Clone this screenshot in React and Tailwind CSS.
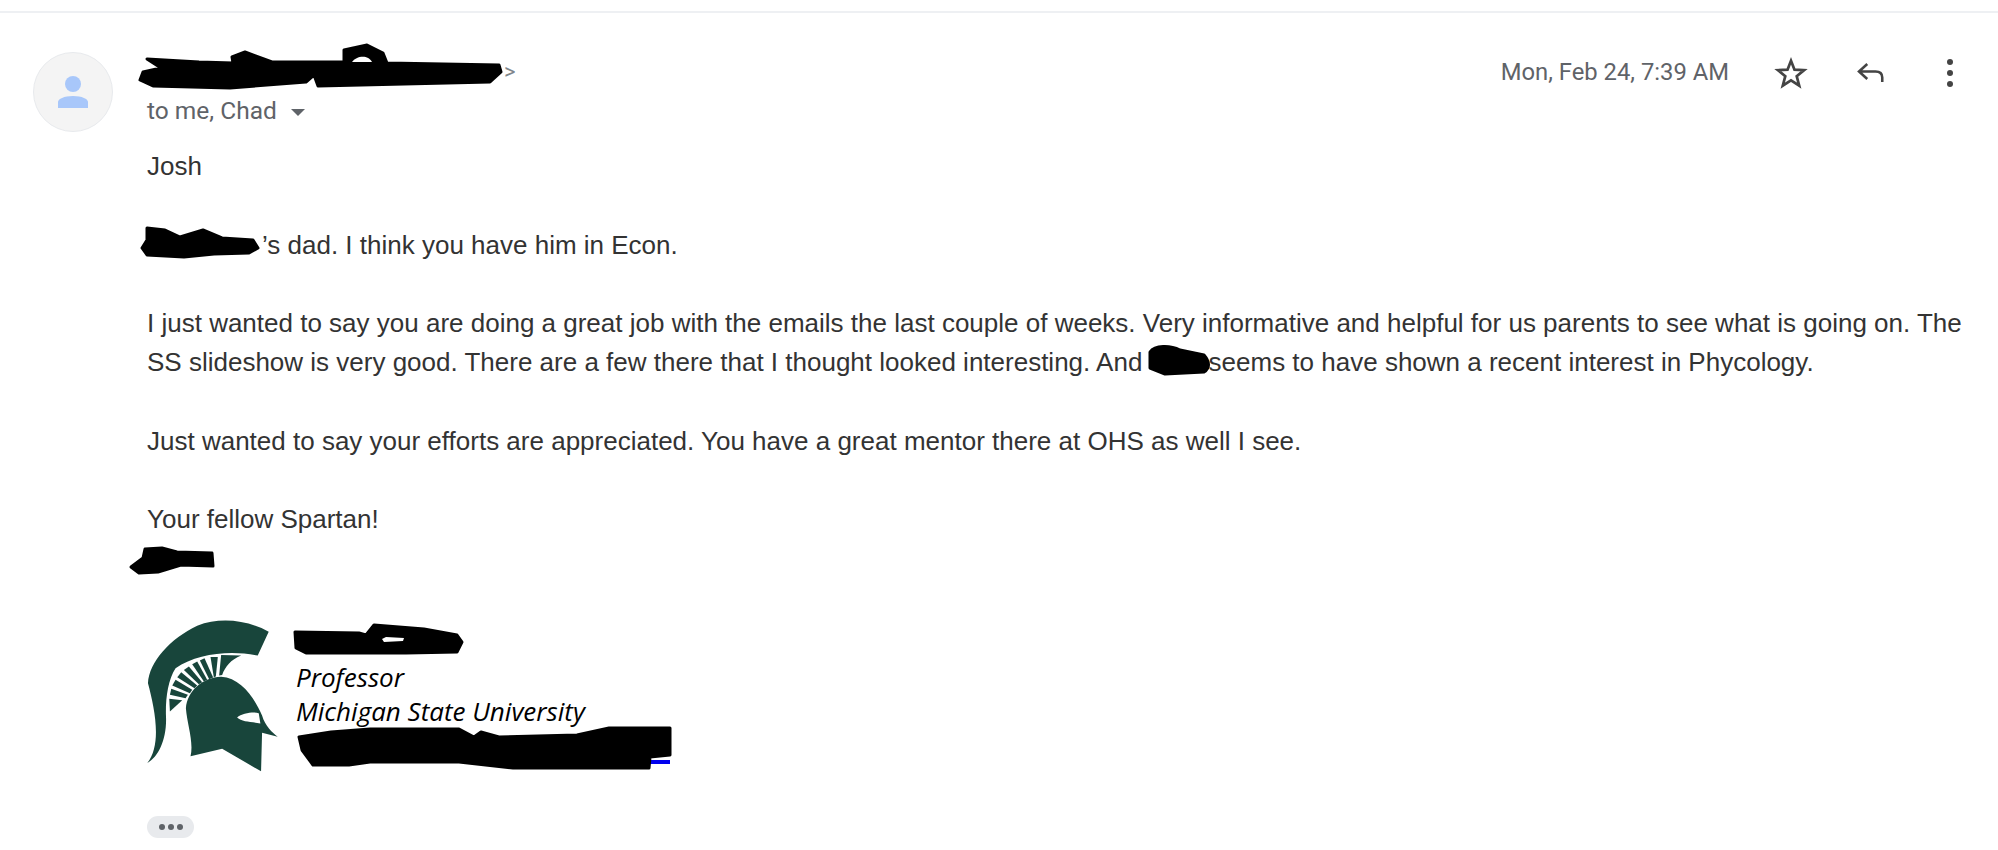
function Logo() {
  return (
    <svg viewBox="50 22 392 460" className="h-[153px] w-[131px] shrink-0">
      <g fill="#18453b">
        <path d="M50 455C95 400 72 290 52 215C55 150 120 80 200 42C270 15 350 25 415 60L382 132C300 115 200 125 135 170C112 205 105 260 106 310C110 380 85 435 50 455Z" />
        <path d="M116 262L155 266L118 300Z" />
        <path d="M122 232L172 250L165 260L118 250Z" />
        <path d="M135 205L185 235L178 245L125 222Z" />
        <path d="M152 182L200 222L192 230L140 197Z" />
        <path d="M175 165L215 212L205 218L160 175Z" />
        <path d="M200 150L230 205L220 210L185 158Z" />
        <path d="M222 140L248 198L236 203L208 147Z" />
        <path d="M240 136L262 136L256 195L250 197Z" />
        <path d="M272 130L332 132C300 145 285 165 275 190L266 192Z" />
        <path d="M180 435C190 390 170 340 166 290C170 240 215 198 272 196C330 200 370 255 395 312C405 345 425 362 442 376L395 364L392 480L275 412Z" />
      </g>
      <path d="M320 318C335 305 370 300 385 305L390 336C360 330 335 332 320 318Z" fill="#fff" />
    </svg>
  );
}

// the black marker scribbles lying over the text
function Redactions() {
  return (
    <svg className="pointer-events-none absolute left-0 top-0 h-[850px] w-[1998px]" viewBox="0 0 1998 850">
      <g stroke="#000" strokeWidth="3" strokeLinejoin="round">
        <path d="M147 59L199 62L233 63L232 57L245 52L272 62L344 62L344 50L367 45L383 53L387 63L499 65L501 72L490 82L318 86L314 75L306 82L230 88L153 86L140 80L143 72L161 68Z" />
        <path d="M147 228L165 230L180 237L203 230L222 238L253 240L258 248L249 253L214 254L184 257L147 255L142 248L147 240Z" />
        <path d="M1150 352C1155 345 1170 345 1180 350L1204 355C1210 362 1210 368 1204 372L1165 374L1150 368Z" />
        <path d="M131 567L143 558L145 549L162 548L177 552L212 553L213 566L181 565L158 572L139 573Z" />
        <path d="M295 632L359 633L366 635L374 625L424 629L457 635L462 642L457 652L406 653L306 653L296 648Z" />
        <path d="M299 737L331 732L370 729L459 729L474 737L481 732L499 737L577 735L609 728L670 728L670 755L650 757L649 768L513 768L459 762L370 762L349 765L313 765L302 750Z" />
      </g>
      <path d="M382 639L386 637L404 638L403 641L384 642Z" fill="#fff" />
      <path d="M352 62C356 56 368 54 372 62Z" fill="#fff" />
    </svg>
  );
}

export default function App() {
  return (
    <div className="relative h-[850px] w-full overflow-hidden bg-white pt-[11px] font-['Liberation_Sans',sans-serif] text-[26px] leading-[39.25px] text-[#333]">
      <div className="h-[2px] bg-[#eef0f3]" />
      <div className="flex pl-[33px] pr-[20px] pt-[39px]">
        <div className="flex h-[80px] w-[80px] shrink-0 items-center justify-center rounded-full border border-[#e8eaed] bg-[#f4f4f4]">
          <svg viewBox="0 0 32 32" className="h-[32px] w-[32px]" fill="#a8c7fa">
            <circle cx="16" cy="8" r="8" />
            <path d="M1 32V26C1 23 7 20 16 20S31 23 31 26V32Z" />
          </svg>
        </div>
        <div className="ml-[34px] min-w-0 flex-1">
          <div className="flex items-start justify-between">
            <div>
              <div className="h-[40px] pl-[357px] font-['Roboto',sans-serif] text-[22px] leading-[40px] text-[#80868b]">&gt;</div>
              <div className="flex h-[38px] items-center font-['Roboto',sans-serif] text-[24.5px] text-[#5f6368]">
                to me, Chad
                <span className="ml-[14px] mt-[2px] h-0 w-0 border-x-[7px] border-t-[7px] border-x-transparent border-t-[#5f6368]" />
              </div>
            </div>
            <div className="flex items-center pr-[16px] pt-[1px] text-[#5f6368]">
              <span className="mr-[43px] font-['Roboto',sans-serif] text-[23.8px]">Mon, Feb 24, 7:39 AM</span>
              <svg viewBox="0 0 24 24" className="h-[38px] w-[38px]" fill="none" stroke="#444" strokeWidth="1.7">
                <path d="M12 4.2L14.2 9.9L20.3 10.2L15.6 14L17.2 20L12 16.7L6.8 20L8.4 14L3.7 10.2L9.8 9.9Z" />
              </svg>
              <svg viewBox="0 0 24 24" className="ml-[43px] h-[36px] w-[36px]" fill="none" stroke="#444" strokeWidth="1.7">
                <path d="M9.5 6L4 11L9.5 16M4 11H15C18 11 19.5 12.5 19.5 15V18" />
              </svg>
              <svg viewBox="0 0 24 36" className="ml-[49px] h-[36px] w-[24px]" fill="#444">
                <circle cx="12" cy="7" r="3" />
                <circle cx="12" cy="18" r="3" />
                <circle cx="12" cy="29" r="3" />
              </svg>
            </div>
          </div>
          <div className="mt-[17px]">Josh</div>
          <div className="mt-[39.25px]">
            <span className="inline-block w-[115px]" />’s dad. I think you have him in Econ.
          </div>
          <div className="mt-[39.25px]">
            I just wanted to say you are doing a great job with the emails the last couple of weeks. Very informative and helpful for us parents to see what is going on. The SS slideshow is very good. There are a few there that I thought looked interesting. And <span className="inline-block w-[59px]" />seems to have shown a recent interest in Phycology.
          </div>
          <div className="mt-[39.25px]">Just wanted to say your efforts are appreciated. You have a great mentor there at OHS as well I see.</div>
          <div className="mt-[39.25px]">Your fellow Spartan!</div>
          <div className="h-[39px]" />
          <div className="mt-[40px] flex">
            <Logo />
            <div className="ml-[18px] pt-[41px] font-['Open_Sans',sans-serif] text-[26px] italic leading-[34px] text-black">
              <div>Professor</div>
              <div>Michigan State University</div>
              <div className="mt-[32px] ml-[354px] h-[4px] w-[20px] bg-[#0000ee]" />
            </div>
          </div>
          <div className="mt-[44px] flex h-[22px] w-[47px] items-center justify-center gap-[3px] rounded-full bg-[#e8eaed]">
            <span className="h-[6px] w-[6px] rounded-full bg-[#5f6368]" />
            <span className="h-[6px] w-[6px] rounded-full bg-[#5f6368]" />
            <span className="h-[6px] w-[6px] rounded-full bg-[#5f6368]" />
          </div>
        </div>
      </div>
      <Redactions />
    </div>
  );
}
